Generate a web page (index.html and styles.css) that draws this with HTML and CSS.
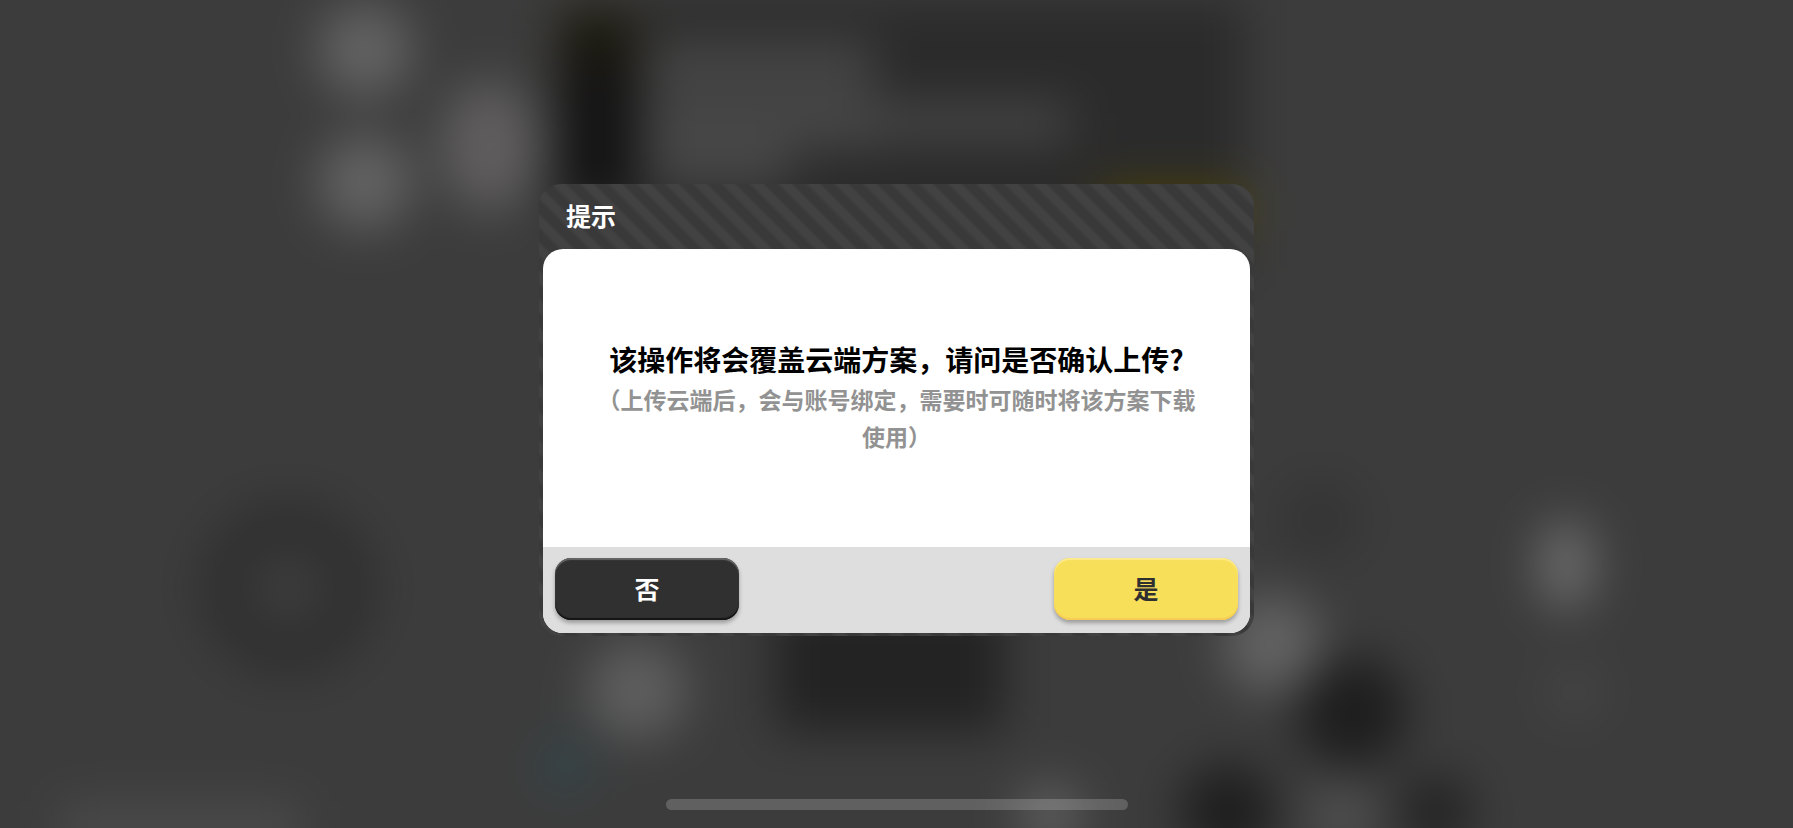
FILE: index.html
```html
<!DOCTYPE html>
<html lang="zh-CN">

<head>
  <meta charset="UTF-8">
  <meta name="viewport" content="width=device-width, initial-scale=1.0">
  <title>提示</title>
  <link rel="stylesheet" href="styles.css">
</head>

<body>
  <!-- Blurred game scene behind the dialog -->
  <svg class="backdrop" viewBox="0 0 1793 828" preserveAspectRatio="xMidYMid slice" aria-hidden="true">
    <defs>
      <filter id="soft" x="-20%" y="-20%" width="140%" height="140%" color-interpolation-filters="sRGB">
        <feGaussianBlur stdDeviation="24" />
      </filter>
    </defs>
    <g filter="url(#soft)">
      <rect x="-200" y="-200" width="2193" height="1228" fill="#3c3c3c" />
      <rect x="640" y="0" width="605" height="270" fill="#2b2b2b" />
      <rect x="560" y="10" width="75" height="200" fill="#131313" />
      <rect x="560" y="10" width="75" height="50" fill="#1a180c" />
      <rect x="650" y="40" width="225" height="110" fill="#3f3f3f" />
      <rect x="650" y="46" width="220" height="28" fill="#484848" />
      <rect x="650" y="106" width="420" height="34" fill="#494949" />
      <rect x="650" y="130" width="140" height="60" fill="#464646" />
      <rect x="1100" y="190" width="145" height="40" fill="#4e4300" />
      <circle cx="365" cy="50" r="48" fill="#626262" />
      <circle cx="365" cy="182" r="48" fill="#626262" />
      <ellipse cx="489" cy="146" rx="50" ry="66" fill="#5f5d5d" />
      <circle cx="288" cy="588" r="64" fill="none" stroke="#2f2f2f" stroke-width="48" />
      <circle cx="637" cy="690" r="50" fill="#5e5e5e" />
      <rect x="775" y="600" width="230" height="132" fill="#232323" />
      <circle cx="565" cy="766" r="28" fill="#34454a" />
      <rect x="60" y="802" width="240" height="60" fill="#4a4a4a" />
      <circle cx="1320" cy="520" r="40" fill="#343434" />
      <circle cx="1272" cy="644" r="50" fill="#626262" />
      <circle cx="1352" cy="712" r="56" fill="#1e1e1e" />
      <circle cx="1228" cy="812" r="48" fill="#1e1e1e" />
      <circle cx="1436" cy="812" r="36" fill="#222222" />
      <circle cx="1342" cy="816" r="34" fill="#505050" />
      <circle cx="1050" cy="816" r="32" fill="#606060" />
      <ellipse cx="1566" cy="565" rx="28" ry="46" fill="#6c6c6c" />
      <circle cx="1574" cy="692" r="24" fill="#484848" />
    </g>
  </svg>

  <main class="overlay">
    <section class="dialog" role="dialog" aria-modal="true" aria-labelledby="dialog-title">
      <header class="dialog-header">
        <h1 id="dialog-title">提示</h1>
      </header>
      <div class="dialog-panel">
        <div class="dialog-body">
          <p class="message">该操作将会覆盖云端方案，请问是否确认上传?</p>
          <p class="note">（上传云端后，会与账号绑定，需要时可随时将该方案下载使用）</p>
        </div>
        <footer class="dialog-footer">
          <button type="button" class="btn btn-no">否</button>
          <button type="button" class="btn btn-yes">是</button>
        </footer>
      </div>
    </section>
  </main>

  <div class="home-indicator"></div>
</body>

</html>
```
FILE: styles.css
```css
* {
  box-sizing: border-box;
}

body {
  margin: 0;
  background-color: #3c3c3c;
  font-family: "Noto Sans CJK SC", "Noto Sans", sans-serif;
  font-weight: bold;
}

.backdrop {
  position: fixed;
  top: 0;
  left: 0;
  width: 100%;
  height: 100%;
}

.overlay {
  position: relative;
  display: flex;
  align-items: center;
  justify-content: center;
  min-height: 100vh;
  padding: 16px 16px 24px;
}

.dialog {
  width: 715px;
  max-width: 100%;
  padding: 0 4px 3px;
  border-radius: 22px;
  /* diagonal stripes */
  background: repeating-linear-gradient(45deg, #393939 0, #393939 7px, #424242 11px, #424242 17px, #393939 20px);
}

.dialog-header {
  padding: 0 23px 3px;
}

.dialog-header h1 {
  margin: 0;
  font-size: 25px;
  line-height: 62px;
  color: white;
}

.dialog-panel {
  border-radius: 20px;
  overflow: hidden;
  background-color: white;
}

.dialog-body {
  padding: 89px 48px 92px;
  text-align: center;
}

.dialog-body p {
  margin: 0;
}

.message {
  font-size: 28px;
  line-height: 43px;
  color: black;
}

.note {
  font-size: 23px;
  line-height: 37px;
  color: #929292;
}

.dialog-footer {
  display: flex;
  justify-content: space-between;
  padding: 11px 12px 13px;
  background-color: #dedede;
}

.btn {
  width: 184px;
  height: 62px;
  padding: 0 0 2px;
  border: none;
  border-radius: 16px;
  font-family: inherit;
  font-size: 25px;
  font-weight: bold;
  cursor: pointer;
}

.btn-no {
  background-color: #303030;
  color: white;
  box-shadow: inset 0 2px 1px #666666, inset 0 -2px 1px #151515, 0 3px 4px rgba(0, 0, 0, 0.3);
}

.btn-yes {
  background-color: #f8df5a;
  color: #303030;
  box-shadow: inset 0 2px 1px #fdea8c, inset 0 -2px 1px #f5cb55, 0 3px 4px rgba(0, 0, 0, 0.3);
}

.home-indicator {
  position: fixed;
  bottom: 18px;
  left: 50%;
  width: 462px;
  max-width: 60%;
  height: 11px;
  border-radius: 6px;
  background-color: rgba(255, 255, 255, 0.19);
  transform: translateX(-50%);
}
```
